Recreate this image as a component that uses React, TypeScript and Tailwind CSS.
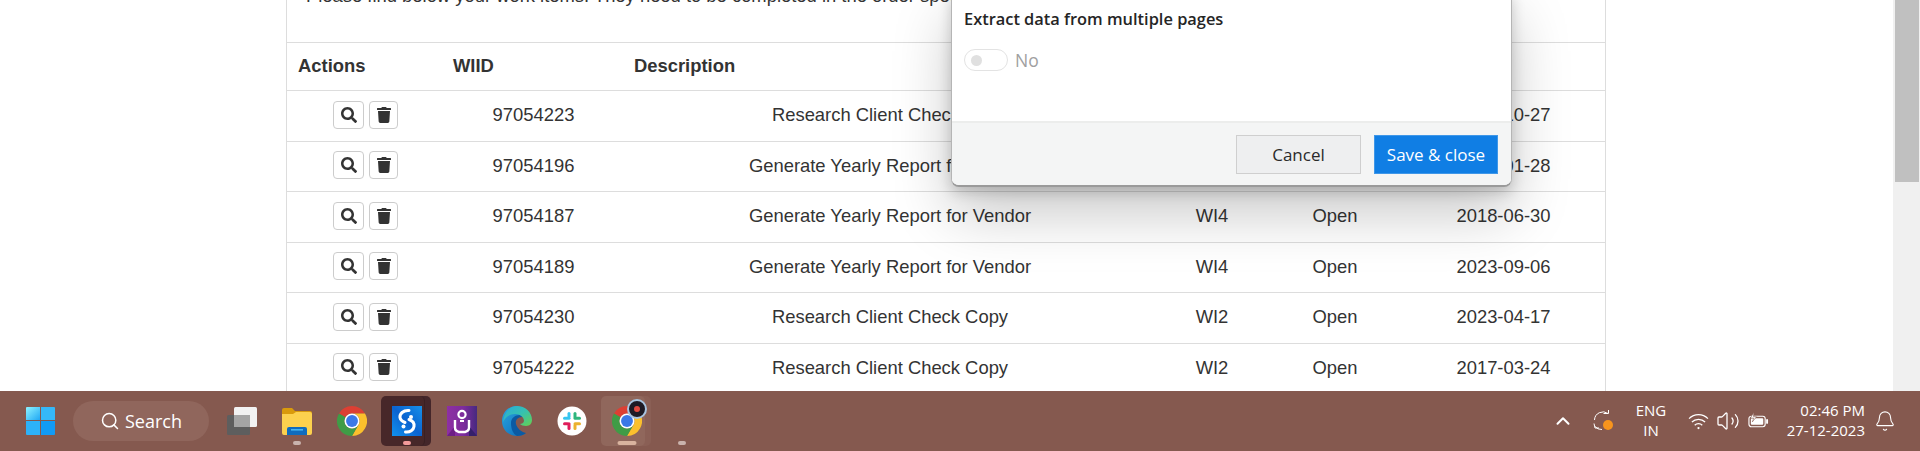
import { FaSearch, FaTrash } from "react-icons/fa";
import { Search, ChevronUp, Volume2, Bell } from "lucide-react";

const rows = [
  ["97054223", "Research Client Check Copy", "WI2", "Open", "2019-10-27"],
  ["97054196", "Generate Yearly Report for Vendor", "WI4", "Open", "2021-01-28"],
  ["97054187", "Generate Yearly Report for Vendor", "WI4", "Open", "2018-06-30"],
  ["97054189", "Generate Yearly Report for Vendor", "WI4", "Open", "2023-09-06"],
  ["97054230", "Research Client Check Copy", "WI2", "Open", "2023-04-17"],
  ["97054222", "Research Client Check Copy", "WI2", "Open", "2017-03-24"],
];

const gridCols = "grid grid-cols-[156px_181px_532px_112px_134px_1fr] items-center";

function Chrome() {
  return (
    <svg viewBox="0 0 48 48" className="w-[30px] h-[30px]">
      <path fill="#dd3f33" d="M24 0A24 24 0 0 1 44.8 12L24 12A12 12 0 0 0 13.6 18L3.2 12A24 24 0 0 1 24 0Z" />
      <path fill="#fbc02d" d="M44.8 12A24 24 0 0 1 24 48L34.4 30A12 12 0 0 0 24 12Z" />
      <path fill="#3f9c46" d="M24 48A24 24 0 0 1 3.2 12L13.6 18A12 12 0 0 0 34.4 30Z" />
      <circle cx="24" cy="24" r="12" fill="#fff" />
      <circle cx="24" cy="24" r="9.5" fill="#3b78e7" />
    </svg>
  );
}

function WinLogo() {
  return (
    <svg viewBox="0 0 30 30" className="w-[30px] h-[30px]">
      <defs>
        <linearGradient id="w1" x1="0" y1="0" x2="1" y2="1">
          <stop offset="0" stopColor="#8ef3ff" />
          <stop offset="1" stopColor="#1fa8f5" />
        </linearGradient>
      </defs>
      <path fill="url(#w1)" d="M1 1h13v13H0V2a1 1 0 0 1 1-1Z" />
      <path fill="#35b8f8" d="M15 1h13a1 1 0 0 1 1 1v12H15Z" />
      <path fill="#2db2f8" d="M0 15h14v14H1a1 1 0 0 1-1-1Z" />
      <path fill="#129bf5" d="M15 15h14v13a1 1 0 0 1-1 1H15Z" />
    </svg>
  );
}

function TaskView() {
  return (
    <svg viewBox="0 0 30 28" className="w-[30px] h-[28px]">
      <rect x="0" y="8" width="23" height="20" rx="1.5" fill="#5e5e5e" />
      <rect x="7" y="0" width="23" height="20" rx="1.5" fill="#f2f2f2" />
      <rect x="7" y="8" width="16" height="12" fill="#a5a5a5" />
    </svg>
  );
}

function Folder() {
  return (
    <svg viewBox="0 0 30 27" className="w-[30px] h-[27px]">
      <path fill="#d99a0c" d="M0 2a2 2 0 0 1 2-2h8l3 3h15a2 2 0 0 1 2 2v4H0Z" />
      <path fill="#fcd14e" d="M0 6h11l3-2h14a2 2 0 0 1 2 2v19a2 2 0 0 1-2 2H2a2 2 0 0 1-2-2Z" />
      <path fill="#0f6cbd" d="M5 21a2 2 0 0 1 2-2h16a2 2 0 0 1 2 2v6H5Z" />
      <rect x="9" y="21" width="12" height="1.6" fill="#45b4f0" />
    </svg>
  );
}

function SLogo() {
  return (
    <svg viewBox="0 0 30 30" className="w-[30px] h-[30px]">
      <defs>
        <linearGradient id="s1" x1="1" y1="0" x2="0" y2="1">
          <stop offset="0" stopColor="#1690ea" />
          <stop offset="0.5" stopColor="#0b63d0" />
          <stop offset="1" stopColor="#1192ee" />
        </linearGradient>
      </defs>
      <rect width="30" height="30" fill="url(#s1)" />
      <path d="M17 4.5C11 4 7.5 8 8 11.5C8.4 14 10.5 15.5 13 16.5" fill="none" stroke="#fff" strokeWidth="3" strokeLinecap="round" />
      <path d="M17 13.5C20 14.5 22.5 17 22 20.5C21.5 24 18 26.5 13.5 26" fill="none" stroke="#fff" strokeWidth="3" strokeLinecap="round" />
      <circle cx="19" cy="11" r="2" fill="#fff" />
      <circle cx="11.5" cy="20.5" r="2" fill="#fff" />
    </svg>
  );
}

function Purple() {
  return (
    <svg viewBox="0 0 30 30" className="w-[30px] h-[30px]">
      <defs>
        <linearGradient id="p1" x1="0" y1="0" x2="1" y2="0">
          <stop offset="0" stopColor="#8e2fa3" />
          <stop offset="0.55" stopColor="#7d2c9d" />
          <stop offset="1" stopColor="#46297f" />
        </linearGradient>
      </defs>
      <rect width="30" height="30" fill="url(#p1)" />
      <path d="M0 30L8 20V30Z" fill="#6d1f86" />
      <path d="M30 30L22 20V30Z" fill="#35206b" />
      <circle cx="15" cy="8.5" r="3.6" fill="none" stroke="#fff" strokeWidth="2.2" />
      <path d="M8 14V21.5C8 24 10 25.5 12 26H18C20 25.5 22 24 22 21.5V14" fill="none" stroke="#fff" strokeWidth="2.4" />
      <path d="M13 15H17" stroke="#fff" strokeWidth="2" />
    </svg>
  );
}

function Edge() {
  return (
    <svg viewBox="0 0 30 30" className="w-[30px] h-[30px]">
      <defs>
        <linearGradient id="e1" x1="0" y1="0" x2="1" y2="1">
          <stop offset="0" stopColor="#29a9dc" />
          <stop offset="0.5" stopColor="#35c1b1" />
          <stop offset="1" stopColor="#67d04e" />
        </linearGradient>
        <linearGradient id="e2" x1="0" y1="0" x2="1" y2="1">
          <stop offset="0" stopColor="#2aa6e0" />
          <stop offset="1" stopColor="#0f6ab8" />
        </linearGradient>
      </defs>
      <path fill="url(#e2)" d="M15 0C6 0 0 7 0 15c0 9 7 15 15 15 3 0 7-1 9-3-6 1-13-1-14-7-1-5 3-8 5-9 2-1 5-1 7 0C20 5 18 0 15 0Z" />
      <path fill="#0b5aa3" d="M9 17c0-5 4-8 9-8 1 0 2 1 2 2-4 0-7 3-6 7 1 4 5 8 10 9-2 2-6 3-9 3-4-2-6-7-6-13Z" />
      <path fill="url(#e1)" d="M15 0c8 0 15 6 15 14 0 3-2 6-6 6-2.5 0-5-1-6-2 1.5 0 4-1 4-3 0-4-4-7-9-7-6 0-10 4-12 8C2 7 7 0 15 0Z" />
    </svg>
  );
}

function Slack() {
  return (
    <svg viewBox="0 0 30 30" className="w-[30px] h-[30px]">
      <circle cx="15" cy="15" r="14.5" fill="#fff" />
      <rect x="6" y="10.8" width="7.5" height="3" rx="1.5" fill="#36c5f0" />
      <rect x="10.5" y="6" width="3" height="6" rx="1.5" fill="#36c5f0" />
      <rect x="16.5" y="6" width="3" height="7.8" rx="1.5" fill="#2eb67d" />
      <rect x="18" y="10.8" width="6" height="3" rx="1.5" fill="#2eb67d" />
      <rect x="16.5" y="16.2" width="7.5" height="3" rx="1.5" fill="#ecb22e" />
      <rect x="16.5" y="18" width="3" height="6" rx="1.5" fill="#ecb22e" />
      <rect x="10.5" y="16.2" width="3" height="7.8" rx="1.5" fill="#e01e5a" />
      <rect x="6" y="16.2" width="6" height="3" rx="1.5" fill="#e01e5a" />
    </svg>
  );
}

function Sync() {
  return (
    <svg viewBox="0 0 22 22" className="w-[22px] h-[22px]" fill="none" stroke="#fff" strokeWidth="1">
      <path d="M1.5 10A8.5 8.5 0 0 1 15 3.5" />
      <path d="M10.5 3.5H15.5V0" />
      <path d="M2 16.5A8.5 8.5 0 0 0 9 19.5" />
      <path d="M1 13.5L2 18H6" />
    </svg>
  );
}

function Wifi() {
  return (
    <svg viewBox="0 0 22 18" className="w-[21px] h-[17px]" fill="none" stroke="#fff" strokeWidth="1.3">
      <path d="M1 6a14 14 0 0 1 20 0" />
      <path d="M4 9.5a10 10 0 0 1 14 0" />
      <path d="M7 13a5.5 5.5 0 0 1 8 0" />
      <circle cx="11" cy="16" r="1.2" fill="#fff" stroke="none" />
    </svg>
  );
}

function Battery() {
  return (
    <svg viewBox="0 0 22 18" className="w-[21px] h-[18px]">
      <rect x="1" y="4" width="17" height="11" rx="2.5" fill="none" stroke="#fff" strokeWidth="1.2" />
      <rect x="3" y="6" width="13" height="7" rx="1" fill="#fff" />
      <rect x="19" y="7" width="2" height="5" rx="1" fill="#fff" />
      <path d="M6 0L2.5 6H6L4.5 10L9 4.5H5.8Z" fill="#fff" stroke="#85594f" strokeWidth="0.6" />
    </svg>
  );
}

function Tile({ children, indicator }: { children?: React.ReactNode; indicator?: string }) {
  return (
    <div className="relative w-[55px] h-[60px] flex items-center justify-center">
      {children}
      {indicator ? <span className={`absolute bottom-[6px] left-1/2 -translate-x-1/2 h-[4px] rounded-full ${indicator}`} /> : null}
    </div>
  );
}

export default function App() {
  return (
    <div className="relative h-[451px] w-[1920px] overflow-hidden bg-white flex flex-col font-['Liberation_Sans',sans-serif] text-[#333]">
      <div className="flex h-[391px]">
        <main className="w-[1893px] overflow-hidden">
          <div className="ml-[286px] w-[1320px] border-x border-[#ddd] text-[18.4px] leading-[25px]">
            <div className="h-[42px] pl-[19px] overflow-hidden">
              <p className="-mt-[17px] whitespace-nowrap">
                Please find below your work items. They need to be completed in the order specified.
              </p>
            </div>
            <div className={`${gridCols} h-[48px] border-t border-[#ddd] pb-[2px] font-bold`}>
              <div className="pl-[11px]">Actions</div>
              <div className="pl-[10px]">WIID</div>
              <div className="pl-[10px]">Description</div>
            </div>
            {rows.map((r) => (
              <div key={r[0]} className={`${gridCols} h-[50.5px] border-t border-[#ddd] pb-[2px] text-center`}>
                <div className="flex justify-center gap-[5px] pl-[1px]">
                  <button className="w-[31px] h-[28px] flex items-center justify-center bg-white border border-[#ccc] rounded-[4px]">
                    <FaSearch className="w-[16px] h-[16px] text-[#333]" />
                  </button>
                  <button className="w-[29px] h-[28px] flex items-center justify-center bg-white border border-[#ccc] rounded-[4px]">
                    <FaTrash className="w-[14px] h-[16px] text-[#333]" />
                  </button>
                </div>
                <div>{r[0]}</div>
                <div>{r[1]}</div>
                <div>{r[2]}</div>
                <div>{r[3]}</div>
                <div>{r[4]}</div>
              </div>
            ))}
          </div>
        </main>
        <div className="w-[27px] h-full bg-[#f0f0f0] pl-[2px] pr-px">
          <div className="h-[182px] bg-[#c0c0c0]" />
        </div>
      </div>

      {/* dialog */}
      <div className="absolute left-[951px] top-[-8px] w-[561px] h-[195px] flex flex-col bg-white rounded-b-[8px] border border-[#b5b5b5] border-b-2 border-b-[#9a9a9a] shadow-[0_26px_58px_rgba(0,0,0,0.22),0_5px_14px_rgba(0,0,0,0.18)] overflow-hidden font-['Open_Sans',sans-serif]">
        <div className="flex-1 pl-[12px] pt-[14px]">
          <div className="text-[16.4px] leading-[24px] font-semibold text-[#252525]">Extract data from multiple pages</div>
          <div className="flex items-center gap-[7px] mt-[16px]">
            <div className="w-[44px] h-[22px] rounded-full border border-[#e3e3e3] bg-white flex items-center pl-[6px]">
              <span className="w-[11px] h-[11px] rounded-full bg-[#e0e0e0]" />
            </div>
            <span className="text-[17.5px] text-[#a0a0a0]">No</span>
          </div>
        </div>
        <div className="h-[64px] bg-[#f4f5f5] border-t-2 border-[#ecedec] flex justify-end gap-[13px] pr-[13px] pt-[12px]">
          <button className="w-[125px] h-[39px] bg-[#eeeff0] border border-[#cfcfcf] text-[17px] text-[#2a2a2a]">Cancel</button>
          <button className="w-[124px] h-[39px] bg-[#107ee4] border border-[#3f97e8] text-[17px] text-white">Save &amp; close</button>
        </div>
      </div>

      {/* taskbar */}
      <div className="h-[60px] bg-[#85594f] flex items-center text-white font-['Open_Sans',sans-serif]">
        <div className="ml-[26px] w-[30px] h-[30px]"><WinLogo /></div>
        <div className="ml-[17px] w-[136px] h-[40px] rounded-full bg-[#90665c] flex items-center pl-[27px] gap-[5px]">
          <Search className="w-[20px] h-[20px]" strokeWidth={1.8} />
          <span className="text-[18px]">Search</span>
        </div>
        <div className="ml-[5px] flex">
          <Tile><TaskView /></Tile>
          <Tile indicator="w-[8px] bg-[#c9b3ad]"><Folder /></Tile>
          <Tile><Chrome /></Tile>
          <Tile indicator="w-[8px] bg-[#f29a9a]">
            <div className="absolute left-[6px] top-[5px] w-[46px] h-[50px] rounded-[5px] bg-[#44262a]" />
            <div className="absolute left-[2px] top-[5px] w-[44px] h-[50px] rounded-[5px] bg-[#472729] border-r border-[#3a2023]" />
            <div className="relative"><SLogo /></div>
          </Tile>
          <Tile><Purple /></Tile>
          <Tile><Edge /></Tile>
          <Tile><Slack /></Tile>
          <Tile indicator="w-[19px] bg-[#d9b39f]">
            <div className="absolute left-[6px] top-[5px] w-[46px] h-[50px] rounded-[5px] bg-[#8a5f55]" />
            <div className="absolute left-[2px] top-[5px] w-[44px] h-[50px] rounded-[5px] bg-[#90675c]" />
            <div className="relative"><Chrome /></div>
            <div className="absolute left-[28px] top-[8px] w-[20px] h-[20px] rounded-full bg-[#1d1a24] border-2 border-[#a8c4df] flex items-center justify-center">
              <span className="w-[6px] h-[6px] rounded-full bg-[#e0483e]" />
            </div>
          </Tile>
          <Tile indicator="w-[8px] bg-[#c9b3ad]" />
        </div>
        <div className="flex-1" />
        <ChevronUp className="w-[22px] h-[22px] mr-[19px]" strokeWidth={2.2} />
        <div className="relative mr-[16px] w-[22px] h-[22px]">
          <Sync />
          <span className="absolute left-[10px] top-[10px] w-[10px] h-[10px] rounded-full bg-[#f7941d]" />
        </div>
        <div className="w-[40px] mr-[17px] pb-[2px] text-center text-[15px] leading-[20px]">
          <div>ENG</div>
          <div>IN</div>
        </div>
        <div className="mr-[7px]"><Wifi /></div>
        <Volume2 className="w-[24px] h-[24px] mr-[8px]" strokeWidth={1.3} />
        <Battery />
        <div className="ml-[6px] w-[90px] pb-[2px] text-right text-[15px] leading-[20px] whitespace-nowrap">
          <div>02:46 PM</div>
          <div>27-12-2023</div>
        </div>
        <Bell className="ml-[9px] mr-[24px] w-[22px] h-[22px]" strokeWidth={1.2} />
      </div>
    </div>
  );
}
